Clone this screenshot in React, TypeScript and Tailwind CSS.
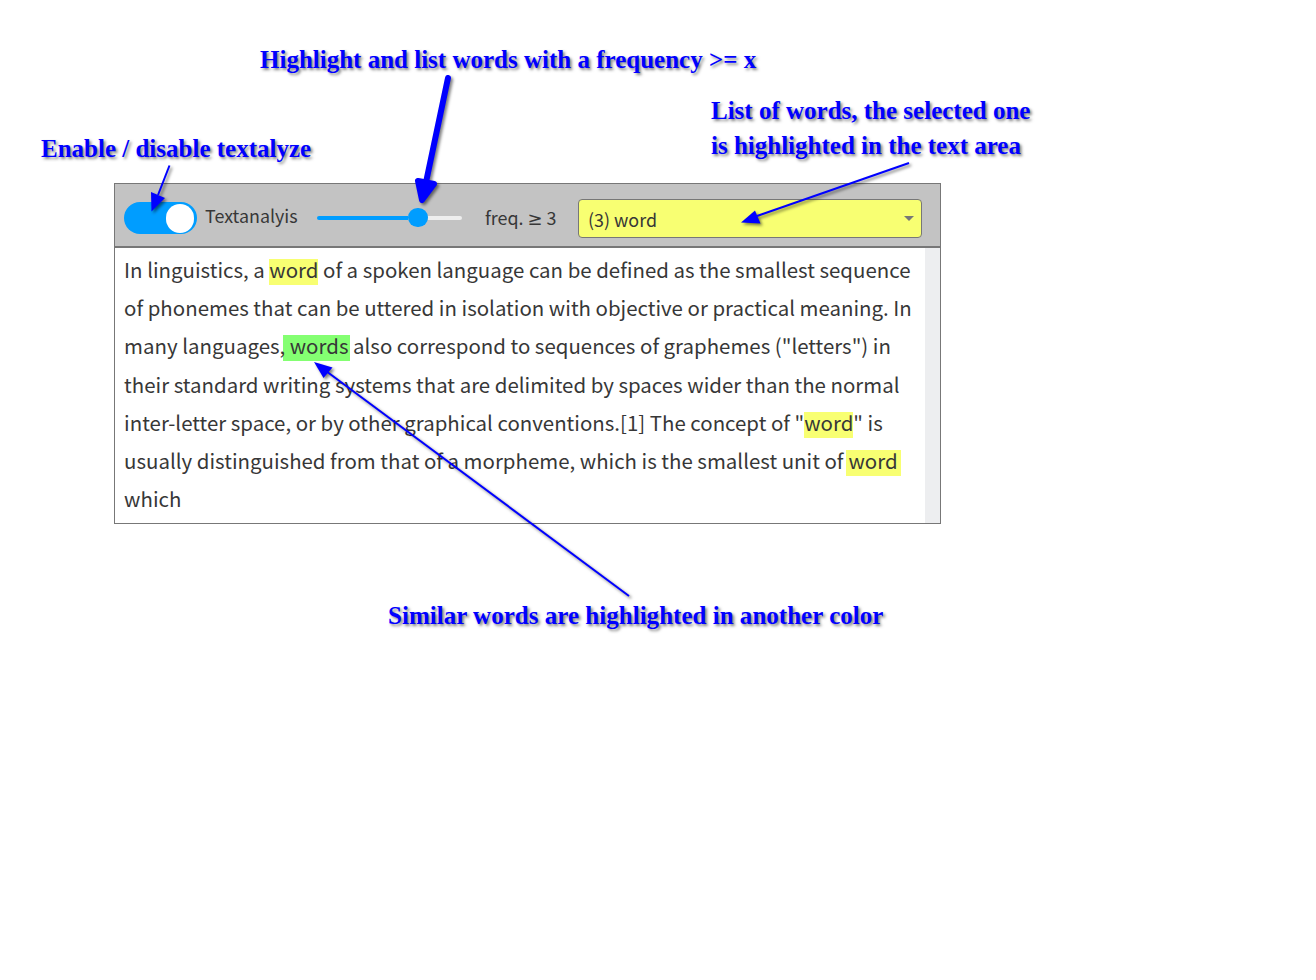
import React from "react";

const note =
  "absolute whitespace-pre font-['Liberation_Serif',serif] text-[25px] font-bold leading-[35px] text-[#0000ff] [text-shadow:2px_2px_3px_rgba(0,0,0,0.5)]";

function Toolbar() {
  return (
    <div className="flex h-[64px] items-start border-b-2 border-[#777777] bg-[#c3c3c3]">
      <div className="ml-[9px] mt-[18px] flex h-8 w-[73px] items-center justify-end rounded-full bg-[#009dff] pr-[3px]">
        <div className="h-[29px] w-[28px] rounded-full bg-white" />
      </div>
      <span className="ml-2 mt-[17px] w-[112px] whitespace-nowrap text-[17.9px] leading-[28px]">Textanalyis</span>
      <div className="mt-[24px] flex h-[19px] w-[145px] items-center">
        <div className="h-1 w-[91px] rounded-l-full bg-[#009dff]" />
        <div className="h-[19px] w-5 rounded-full bg-[#009dff]" />
        <div className="h-1 flex-1 rounded-r-full bg-[#eeeeee]" />
      </div>
      <span className="ml-[23px] mt-[19px] w-[93px] whitespace-pre text-[17.9px] leading-[28px]">freq. <span className="inline-block w-[15px] font-['DejaVu_Sans',sans-serif] text-[18px] leading-[20px]">≥</span> 3</span>
      <div className="mt-[15px] flex h-[39px] w-[344px] items-center justify-between rounded border border-[#777777] bg-[#f8ff72] pl-[9px] pr-[7px]">
        <span className="mt-[1px] text-[17.9px] leading-[28px]">(3) word</span>
        <svg className="mt-[-2px] size-[10px]" viewBox="0 0 10 10"><path d="M0 3H10L5 8Z" fill="#777777" /></svg>
      </div>
    </div>
  );
}

const hit = "inline-block h-[26px] whitespace-pre align-baseline leading-[20px] text-inherit";

function TextArea() {
  return (
    <div className="flex h-[275px]">
      <div className="min-w-0 flex-1 whitespace-pre pl-[9.1px] pt-[2px] text-[20.45px] leading-[38.2px]">
        <div className="h-[38.2px]">In linguistics, a <mark className={`${hit} bg-[#f8ff72]`}>word</mark> of a spoken language can be defined as the smallest sequence</div>
        <div className="h-[38.2px]">of phonemes that can be uttered in isolation with objective or practical meaning. In</div>
        <div className="h-[38.2px]">many languages<span className="relative z-10">,</span><mark className={`${hit} -ml-0.5 -mr-0.5 bg-[#84ff72] pl-[2px] pr-0.5`}> words</mark> also correspond to sequences of graphemes ("letters") in</div>
        <div className="h-[38.2px]">their standard writing systems that are delimited by spaces wider than the normal</div>
        <div className="h-[38.2px]">inter-letter space, or by other graphical conventions.[1] The concept of "<mark className={`${hit} bg-[#f8ff72]`}>word</mark>" is</div>
        <div className="h-[38.2px]">usually distinguished from that of a morpheme, which is the smallest unit of<mark className={`${hit} ml-0.5 bg-[#f8ff72] pl-[3px] pr-[3px]`}>word</mark></div>
        <div className="h-[38.2px]">which</div>
      </div>
      <div className="w-[15px] shrink-0 bg-[#edeef0]" />
    </div>
  );
}

function Arrows() {
  return (
    <svg
      className="pointer-events-none absolute left-0 top-0 h-[980px] w-[1316px] [filter:drop-shadow(2px_2px_1.5px_rgba(0,0,0,0.5))]"
      viewBox="0 0 1316 980"
      fill="#0000ff"
      stroke="#0000ff"
    >
      <path d="M169.5 165.5L158 195" strokeWidth="2" />
      <path d="M151.5 211.5L151 192L165 198Z" stroke="none" />
      <path d="M448 78L425 187" strokeWidth="6" strokeLinecap="round" />
      <path d="M418 181L434 184L422 200Z" strokeWidth="6" strokeLinejoin="round" />
      <path d="M909 163L757 216" strokeWidth="2" />
      <path d="M741 222.500L755 210.500L760.500 223.500Z" stroke="none" />
      <path d="M629 596L326 371" strokeWidth="2" />
      <path d="M314 362L332.500 367.500L323.500 378Z" stroke="none" />
    </svg>
  );
}

export default function App() {
  return (
    <main className="relative h-[980px] w-[1316px] overflow-hidden bg-white pl-[114px] pt-[183px] font-['Noto_Sans_CJK_SC',sans-serif] text-[#373737]">
      <section className="h-[341px] w-[827px] border border-[#777777]">
        <Toolbar />
        <TextArea />
      </section>
      <p className={`${note} left-[260px] top-[42px]`}>{"Highlight and list words with a frequency >= x"}</p>
      <p className={`${note} left-[41px] top-[131px]`}>Enable / disable textalyze</p>
      <p className={`${note} left-[711px] top-[93px]`}>{"List of words, the selected one\nis highlighted in the text area"}</p>
      <p className={`${note} left-[388px] top-[598px] tracking-[0.02px]`}>Similar words are highlighted in another color</p>
      <Arrows />
    </main>
  );
}
